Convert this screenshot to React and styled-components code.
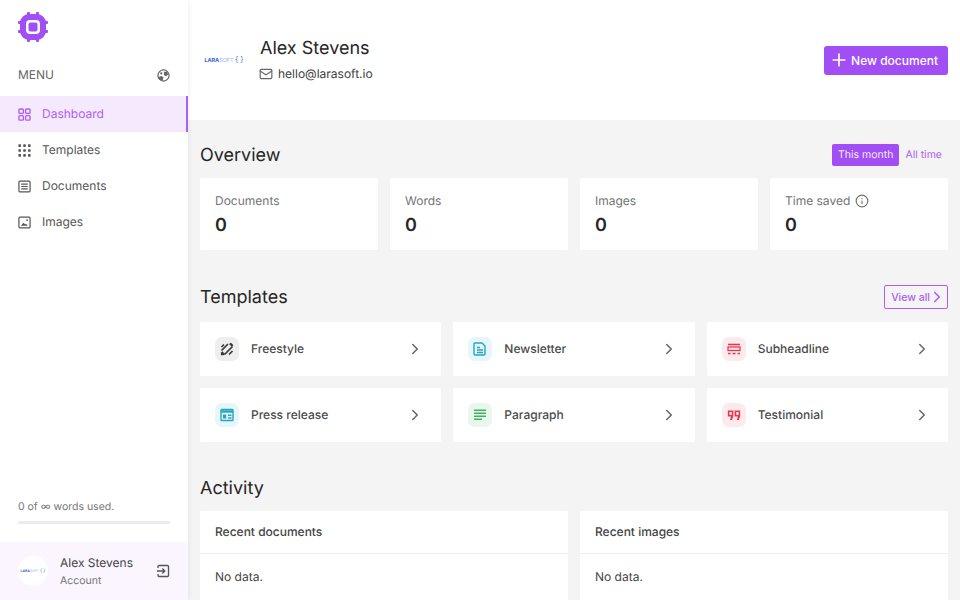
import styled, { createGlobalStyle } from 'styled-components';
import { LuChevronRight, LuInfo, LuMail, LuPlus } from 'react-icons/lu';

const GlobalStyle = createGlobalStyle`
  html, body {
    margin: 0;
    height: 100%;
    overflow: hidden;
    background: #f4f4f4;
    font-family: Inter, "Liberation Sans", sans-serif;
    text-rendering: geometricPrecision;
    color: #262626;
  }
  * {
    box-sizing: border-box;
  }
`;

function ChipLogo() {
  return (
    <svg width="32" height="32" viewBox="0 0 32 32" fill="#a24ef5">
      <rect x="10" y="1" width="3" height="5" rx="1" />
      <rect x="19" y="1" width="3" height="5" rx="1" />
      <rect x="10" y="26" width="3" height="5" rx="1" />
      <rect x="19" y="26" width="3" height="5" rx="1" />
      <rect x="1" y="10" width="5" height="3" rx="1" />
      <rect x="1" y="19" width="5" height="3" rx="1" />
      <rect x="26" y="10" width="5" height="3" rx="1" />
      <rect x="26" y="19" width="5" height="3" rx="1" />
      <path
        fillRule="evenodd"
        d="M12 3h8a9 9 0 0 1 9 9v8a9 9 0 0 1-9 9h-8a9 9 0 0 1-9-9v-8a9 9 0 0 1 9-9Zm1 6a4 4 0 0 0-4 4v6a4 4 0 0 0 4 4h6a4 4 0 0 0 4-4v-6a4 4 0 0 0-4-4Z"
      />
      <rect x="11.5" y="11.5" width="9" height="9" rx="2" />
    </svg>
  );
}

function ThemeIcon() {
  return (
    <svg width="13" height="13" viewBox="0 0 14 14" fill="none">
      <circle cx="7" cy="7" r="6" stroke="#666" strokeWidth="1.3" />
      <path d="M1.5 8.5 5 7.5l2 1.500-1 3.500C3.500 12.300 2 10.800 1.500 8.500Z" fill="#666" />
      <path d="M7.500 3h3.500l1 3.300-2.500 1.400-2-1.200Z" fill="#666" />
      <circle cx="4.600" cy="4.800" r="1.200" fill="#666" />
    </svg>
  );
}

function DashboardIcon() {
  return (
    <svg viewBox="0 0 14 14" fill="none" stroke="currentColor" strokeWidth="1.5">
      <rect x="1" y="1" width="4.800" height="4.800" rx="1" />
      <rect x="8.200" y="1" width="4.800" height="4.800" rx="1" />
      <rect x="1" y="8.200" width="4.800" height="4.800" rx="1" />
      <rect x="8.200" y="8.200" width="4.800" height="4.800" rx="1" />
    </svg>
  );
}

function TemplatesIcon() {
  const spots = [1.8, 7, 12.2];
  return (
    <svg viewBox="0 0 14 14" fill="currentColor">
      {spots.map((y) =>
        spots.map((x) => <rect key={`${x}-${y}`} x={x - 1.4} y={y - 1.4} width="2.8" height="2.8" rx="0.7" />)
      )}
    </svg>
  );
}

function DocumentsIcon() {
  return (
    <svg viewBox="0 0 14 14" fill="none" stroke="currentColor" strokeWidth="1.3">
      <rect x="1" y="1.300" width="12" height="11.400" rx="1" />
      <path d="M3.500 4.500h7M3.500 7h7M3.500 9.500h7" />
    </svg>
  );
}

function ImagesIcon() {
  return (
    <svg viewBox="0 0 14 14" fill="none" stroke="currentColor" strokeWidth="1.3">
      <rect x="1" y="1.300" width="12" height="11.400" rx="1" />
      <path d="M3 10.500 6 7.300l1.800 1.900 1-.9 1.700 2.200Z" fill="currentColor" stroke="none" />
      <circle cx="9.800" cy="4.500" r="0.900" fill="currentColor" stroke="none" />
    </svg>
  );
}

function ExitIcon() {
  return (
    <svg width="14" height="14" viewBox="0 0 14 14" fill="none" stroke="#555" strokeWidth="1.3">
      <path d="M2 4V2.500a1 1 0 0 1 1-1h8.500a1 1 0 0 1 1 1v9a1 1 0 0 1-1 1H3a1 1 0 0 1-1-1V10" />
      <path d="M1 7h7.500M6.300 4.500 8.800 7l-2.500 2.500" />
    </svg>
  );
}

function FreestyleIcon() {
  return (
    <svg width="14" height="14" viewBox="0 0 14 14" fill="none" stroke="#3a3a3a" strokeWidth="1.7">
      <path d="m1.500 8.500 6.500-6.500M1.500 5l2.500-2.500M4.500 12.500l8-8M9 12.500l3.500-3.500" />
      <path d="M3.500 13.300 1 13.200l-.2-2.500 1.500-1.500 2.700 2.700Z" fill="#3a3a3a" stroke="none" />
      <path d="m9 2 2-1.300 2.300 2.300L12 5Z" fill="#3a3a3a" stroke="none" />
    </svg>
  );
}

function NewsletterIcon() {
  return (
    <svg width="14" height="14" viewBox="0 0 14 14" fill="none" stroke="#27a5c2" strokeWidth="1.4">
      <path d="M2 1h7l3 3v8a1 1 0 0 1-1 1H2a1 1 0 0 1-1-1V2a1 1 0 0 1 1-1Z" />
      <path d="M4 5.500h3M4 8h6M4 10.500h6" />
    </svg>
  );
}

function PressIcon() {
  return (
    <svg width="14" height="14" viewBox="0 0 14 14" fill="none" stroke="#27a5c2" strokeWidth="1.4">
      <rect x="1" y="1.500" width="12" height="11" rx="0.800" />
      <path d="M1 3.500h12" strokeWidth="2.4" />
      <path d="M3 6.500h3.200v4H3Z" fill="#27a5c2" stroke="none" />
      <path d="M8 7.200h3.500M8 10h3.500" />
    </svg>
  );
}

function ParagraphIcon() {
  return (
    <svg width="14" height="14" viewBox="0 0 14 14" fill="none" stroke="#3cb55c" strokeWidth="1.6">
      <path d="M1 2.200h12M1 5.200h12M1 8.200h12M1 11.200h8" />
    </svg>
  );
}

function SubheadlineIcon() {
  return (
    <svg width="14" height="14" viewBox="0 0 14 14" fill="none" stroke="#e8384f" strokeWidth="1.3">
      <path d="M1 2.500h12" strokeWidth="1.600" />
      <rect x="1" y="5" width="12" height="3.500" />
      <path d="M1 11.500h2.500M5.500 11.500H8.500M10.500 11.500H13" strokeWidth="1.600" />
    </svg>
  );
}

function QuoteIcon() {
  return (
    <svg width="14" height="14" viewBox="0 0 14 14" fill="#e8384f">
      <path fillRule="evenodd" d="M.8 2.500h5.600v5.500L5 12H3l1-3.500H.8Zm1.700 1.500v3h2.300V4Z" />
      <path fillRule="evenodd" d="M7.600 2.500h5.600v5.500L11.800 12h-2l1-3.500H7.600Zm1.700 1.500v3h2.300V4Z" />
    </svg>
  );
}

const NAV_ITEMS = [
  { label: 'Dashboard', Icon: DashboardIcon, active: true },
  { label: 'Templates', Icon: TemplatesIcon },
  { label: 'Documents', Icon: DocumentsIcon },
  { label: 'Images', Icon: ImagesIcon }
];

const STATS = [
  { label: 'Documents' },
  { label: 'Words' },
  { label: 'Images' },
  { label: 'Time saved', info: true }
];

const TEMPLATES = [
  { label: 'Freestyle', Icon: FreestyleIcon, tint: '#eeeeee' },
  { label: 'Newsletter', Icon: NewsletterIcon, tint: '#e6f6fa' },
  { label: 'Subheadline', Icon: SubheadlineIcon, tint: '#fdeaec' },
  { label: 'Press release', Icon: PressIcon, tint: '#e6f6fa' },
  { label: 'Paragraph', Icon: ParagraphIcon, tint: '#eaf7ed' },
  { label: 'Testimonial', Icon: QuoteIcon, tint: '#fdeaec' }
];

export default function App() {
  return (
    <>
      <GlobalStyle />
      <Page>
        <Sidebar>
          <LogoRow>
            <ChipLogo />
          </LogoRow>
          <MenuRow>
            <span>MENU</span>
            <ThemeIcon />
          </MenuRow>
          <Nav>
            {NAV_ITEMS.map(({ label, Icon, active }) => (
              <NavItem key={label} $active={active}>
                <Icon />
                <span>{label}</span>
              </NavItem>
            ))}
          </Nav>
          <Usage>
            <UsageText>0 of ∞ words used.</UsageText>
            <UsageBar />
          </Usage>
          <Account>
            <Avatar>
              <BrandMark $size={3.5}>
                <b>LARA</b>SOFT <i>{'{ }'}</i>
              </BrandMark>
            </Avatar>
            <AccountText>
              <AccountName>Alex Stevens</AccountName>
              <AccountRole>Account</AccountRole>
            </AccountText>
            <ExitIcon />
          </Account>
        </Sidebar>

        <Main>
          <Header>
            <Profile>
              <BrandSlot>
                <BrandMark $size={5.5}>
                  <b>LARA</b>SOFT <i>{'{ }'}</i>
                </BrandMark>
              </BrandSlot>
              <div>
                <ProfileName>Alex Stevens</ProfileName>
                <ProfileMail>
                  <LuMail size={14} color="#666" />
                  hello@larasoft.io
                </ProfileMail>
              </div>
            </Profile>
            <PrimaryButton>
              <LuPlus size={20} />
              New document
            </PrimaryButton>
          </Header>

          <Content>
            <SectionHead>
              <SectionTitle>Overview</SectionTitle>
              <Toggle>
                <ToggleOption $active>This month</ToggleOption>
                <ToggleOption>All time</ToggleOption>
              </Toggle>
            </SectionHead>
            <StatGrid>
              {STATS.map(({ label, info }) => (
                <StatCard key={label}>
                  <StatLabel>
                    {label}
                    {info && <LuInfo size={14} />}
                  </StatLabel>
                  <StatValue>0</StatValue>
                </StatCard>
              ))}
            </StatGrid>

            <SectionHead $spaced>
              <SectionTitle>Templates</SectionTitle>
              <ViewAll>
                View all
                <LuChevronRight size={18} strokeWidth={2.2} />
              </ViewAll>
            </SectionHead>
            <TemplateGrid>
              {TEMPLATES.map(({ label, Icon, tint }) => (
                <TemplateCard key={label}>
                  <IconTile $tint={tint}>
                    <Icon />
                  </IconTile>
                  <TemplateName>{label}</TemplateName>
                  <LuChevronRight size={18} color="#666" />
                </TemplateCard>
              ))}
            </TemplateGrid>

            <ActivityTitle>Activity</ActivityTitle>
            <ActivityGrid>
              <ActivityCard>
                <ActivityHead>Recent documents</ActivityHead>
                <ActivityBody>No data.</ActivityBody>
              </ActivityCard>
              <ActivityCard>
                <ActivityHead>Recent images</ActivityHead>
                <ActivityBody>No data.</ActivityBody>
              </ActivityCard>
            </ActivityGrid>
          </Content>
        </Main>
      </Page>
    </>
  );
}

const Page = styled.div`
  display: flex;
  width: 960px;
  height: 600px;
  overflow: hidden;
`;

const Sidebar = styled.aside`
  position: relative;
  z-index: 1;
  flex: 0 0 188px;
  display: flex;
  flex-direction: column;
  background: #fff;
  box-shadow: 0 0 6px rgba(0, 0, 0, 0.08);
`;

const LogoRow = styled.div`
  display: flex;
  height: 54px;
  padding: 11px 0 0 17px;
`;

const MenuRow = styled.div`
  display: flex;
  justify-content: space-between;
  align-items: center;
  height: 42px;
  padding: 0 18px;
  font-size: 12px;
  color: #666;

  span {
    padding-bottom: 2px;
  }
`;

const Nav = styled.nav`
  display: flex;
  flex-direction: column;
`;

const NavItem = styled.div`
  display: flex;
  align-items: center;
  gap: 11.5px;
  height: 36px;
  padding-left: 17.5px;
  font-size: 12px;
  color: ${({ $active }) => ($active ? '#ad5ff5' : '#555')};
  background: ${({ $active }) => ($active ? '#f5e9fd' : 'transparent')};
  border-right: 2px solid ${({ $active }) => ($active ? '#ad5ff5' : 'transparent')};

  svg {
    width: 13px;
    height: 13px;
  }

  span {
    padding-bottom: 2px;
  }
`;

const Usage = styled.div`
  margin-top: auto;
  padding: 0 18px 18px;
`;

const UsageText = styled.div`
  font-size: 10.5px;
  color: #777;
  margin-bottom: 8px;
`;

const UsageBar = styled.div`
  height: 3px;
  border-radius: 2px;
  background: #ececec;
`;

const Account = styled.div`
  display: flex;
  align-items: center;
  height: 58px;
  padding: 0 18px;
  background: #faf5ff;
`;

const Avatar = styled.div`
  display: flex;
  align-items: center;
  justify-content: center;
  width: 30px;
  height: 30px;
  margin-right: 12px;
  border-radius: 50%;
  background: #fff;
  overflow: hidden;
`;

const BrandMark = styled.span`
  font-size: ${({ $size }) => $size}px;
  letter-spacing: -0.01em;
  white-space: nowrap;
  color: #9db4ef;

  b {
    color: #3c63d8;
    font-weight: 700;
  }

  i {
    font-style: normal;
    font-size: 1.4em;
    color: #5d80e4;
  }
`;

const AccountText = styled.div`
  flex: 1;
  min-width: 0;
`;

const AccountName = styled.div`
  font-size: 12px;
  line-height: 17px;
  color: #444;
`;

const AccountRole = styled.div`
  margin-top: 1px;
  font-size: 10.5px;
  line-height: 17px;
  color: #777;
`;

const Main = styled.main`
  flex: 1;
  min-width: 0;
`;

const Header = styled.header`
  display: flex;
  justify-content: space-between;
  align-items: center;
  height: 120px;
  padding: 0 12px 0 16px;
  background: #fff;
`;

const Profile = styled.div`
  display: flex;
  align-items: center;
  gap: 16px;
  padding-bottom: 2px;
`;

const BrandSlot = styled.div`
  display: flex;
  justify-content: center;
  width: 40px;
`;

const ProfileName = styled.div`
  font-size: 18px;
  line-height: 24px;
  color: #262626;
`;

const ProfileMail = styled.div`
  display: flex;
  align-items: center;
  gap: 5px;
  margin-top: 5px;
  font-size: 12px;
  color: #404040;

  svg {
    margin-left: -1px;
  }
`;

const PrimaryButton = styled.button`
  display: flex;
  align-items: center;
  gap: 2px;
  height: 29px;
  padding: 0 10px 0 5px;
  border: none;
  border-radius: 3px;
  background: #a24ef5;
  color: #fff;
  font: 500 12px Inter, sans-serif;
`;

const Content = styled.div`
  padding: 0 12px;
`;

const SectionHead = styled.div`
  display: flex;
  justify-content: space-between;
  align-items: center;
  height: 58px;
  padding-top: 12px;
  margin-top: ${({ $spaced }) => ($spaced ? '12px' : '0')};
`;

const SectionTitle = styled.h2`
  margin: 0;
  font-size: 18px;
  font-weight: 400;
  color: #262626;
`;

const Toggle = styled.div`
  display: flex;
  align-items: center;
  gap: 6px;
`;

const ToggleOption = styled.span`
  height: 22px;
  padding: 0 ${({ $active }) => ($active ? '6px' : '0')};
  margin-right: ${({ $active }) => ($active ? '0' : '6px')};
  border-radius: 2px;
  font-size: 10.5px;
  line-height: 22px;
  color: ${({ $active }) => ($active ? '#f3e8ff' : '#ad5ff5')};
  background: ${({ $active }) => ($active ? '#a24ef5' : 'transparent')};
`;

const StatGrid = styled.div`
  display: grid;
  grid-template-columns: repeat(4, 1fr);
  gap: 12px;
`;

const StatCard = styled.div`
  height: 72px;
  padding: 15px 15px;
  border-radius: 2px;
  background: #fff;
`;

const StatLabel = styled.div`
  display: flex;
  align-items: center;
  gap: 4.5px;
  height: 16px;
  font-size: 12px;
  line-height: 16px;
  color: #737373;
`;

const StatValue = styled.div`
  margin-top: 5px;
  font-size: 18px;
  line-height: 24px;
  font-weight: 600;
  color: #262626;
`;

const ViewAll = styled.button`
  display: flex;
  align-items: center;
  height: 24px;
  padding: 0 1px 0 6.5px;
  border: 1px solid #ad5ff5;
  border-radius: 2px;
  background: transparent;
  color: #ad5ff5;
  font: 500 10.5px Inter, sans-serif;

  svg {
    margin-left: -2px;
  }
`;

const TemplateGrid = styled.div`
  display: grid;
  grid-template-columns: repeat(3, 1fr);
  gap: 12px;
  margin-top: 2px;
`;

const TemplateCard = styled.div`
  display: flex;
  align-items: center;
  height: 54px;
  padding: 0 17px 0 15px;
  border-radius: 2px;
  background: #fff;
`;

const IconTile = styled.div`
  display: flex;
  align-items: center;
  justify-content: center;
  width: 24px;
  height: 24px;
  margin-right: 12px;
  border-radius: 7px;
  background: ${({ $tint }) => $tint};
`;

const TemplateName = styled.div`
  flex: 1;
  padding-bottom: 2px;
  font-size: 12px;
  font-weight: 500;
  color: #4a4a4a;
`;

const ActivityTitle = styled.h2`
  margin: 35px 0 11px;
  font-size: 18px;
  line-height: 23px;
  font-weight: 400;
  color: #262626;
`;

const ActivityGrid = styled.div`
  display: grid;
  grid-template-columns: repeat(2, 1fr);
  gap: 12px;
`;

const ActivityCard = styled.div`
  border-radius: 2px 2px 0 0;
  background: #fff;
`;

const ActivityHead = styled.div`
  height: 43px;
  padding: 0 15px;
  border-bottom: 1px solid #f0f0f0;
  font-size: 12px;
  font-weight: 500;
  line-height: 42px;
  color: #444;
`;

const ActivityBody = styled.div`
  padding: 15px 15px 40px;
  font-size: 12px;
  line-height: 16px;
  color: #444;
`;
